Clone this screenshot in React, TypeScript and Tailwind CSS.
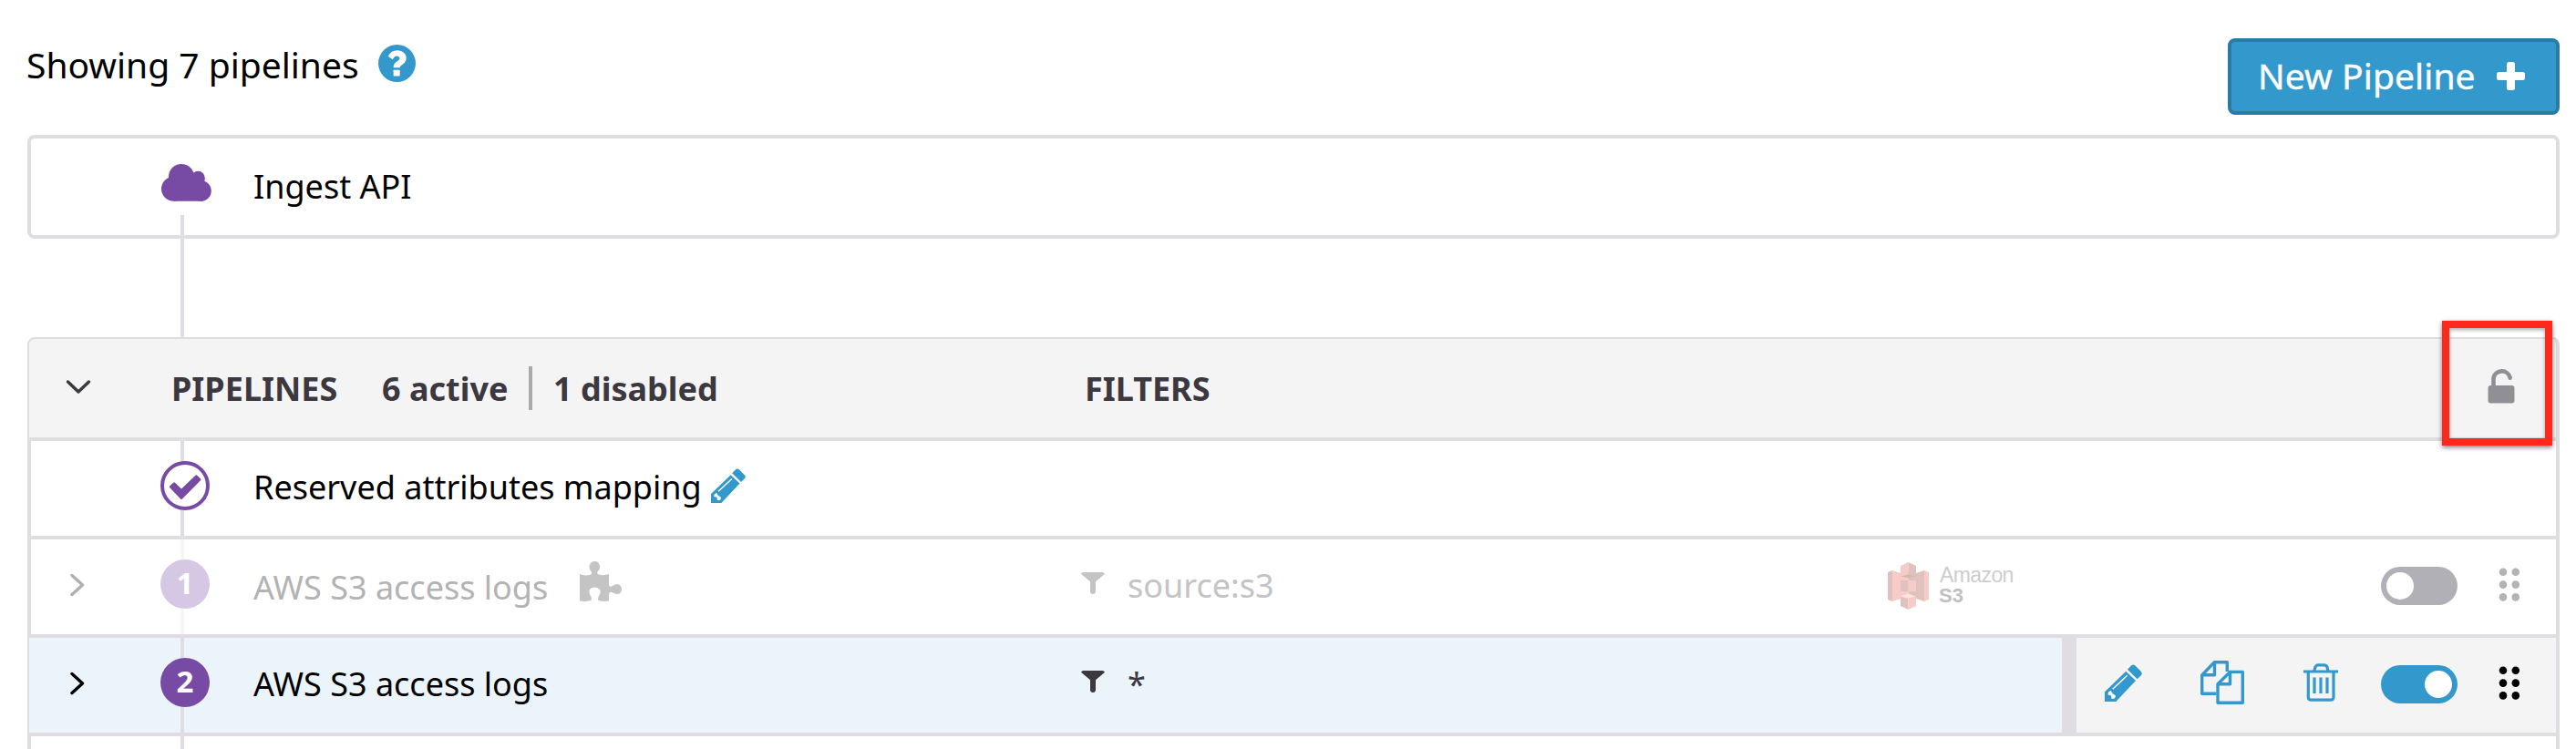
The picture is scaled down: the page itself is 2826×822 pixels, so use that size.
import React from "react";

const LINE = "bg-[#dfdde2]";

function PencilIcon({ className }: { className: string }) {
  return (
    <svg viewBox="0 0 41 41" className={className} fill="#3399cd">
      <path d="M25 5.700 L29 1.500 Q31 -.5 33.200 1.300 L39.700 7.800 Q41.600 10 40 12 L35.700 16.200 Z" />
      <path d="M23.300 7.700 L34 17.900 L12.300 41 H0 V30.300 Z" />
      <path d="M8.700 27.300 L24.700 12.300" stroke="#fff" strokeWidth="1.5" fill="none" />
      <path d="M4 30.500 L6.5 29 L8.5 32 L12 34.5 L11 37.5 L7.5 38 L7 34.2 L3.4 33.4 Z" fill="#fff" />
    </svg>
  );
}

function ChevronRight({ className }: { className: string }) {
  return (
    <svg viewBox="0 0 16 26" className={className} fill="none" stroke="currentColor" strokeWidth="3.4" strokeLinecap="round" strokeLinejoin="round">
      <path d="M2 2.5 L13.5 13 L2 23.5" />
    </svg>
  );
}

function FilterIcon({ className }: { className: string }) {
  return (
    <svg viewBox="0 0 26 24" className={className} fill="currentColor">
      <path d="M2.5 0 H23.5 Q25 0 26 1.6 Q25.4 2.6 24 3.5 L16 10.3 V21.5 Q15.6 24 13 24 Q10.4 24 10 21.5 V10.3 L2 3.5 Q.6 2.6 0 1.6 Q1 0 2.5 0 Z" />
    </svg>
  );
}

function Dots() {
  return (
    <svg viewBox="0 0 24 38" className="ml-[45px] mt-[31px] h-[38px] w-6 shrink-0" fill="currentColor">
      {[5, 18.8].map((x) => [4.8, 18.6, 32.4].map((y) => <circle key={`${x}-${y}`} cx={x} cy={y} r="4.3" />))}
    </svg>
  );
}

function Toggle({ on }: { on: boolean }) {
  return (
    <span className={`mt-[30px] flex h-[42px] w-[84px] shrink-0 rounded-full p-1.5 ${on ? "justify-end bg-[#3399cd]" : "justify-start bg-[#b1b0b6]"}`}>
      <span className="size-[30px] rounded-full bg-white" />
    </span>
  );
}

function Rail({ faded, children }: { faded?: boolean; children?: React.ReactNode }) {
  return (
    <div className="flex h-full w-[54px] shrink-0 flex-col">
      <div className={`ml-[22px] h-[22px] w-1 ${faded ? "bg-[#f5f5f6]" : LINE}`} />
      {children}
      <div className={`ml-[22px] w-1 flex-1 ${faded ? "bg-[#f5f5f6]" : LINE}`} />
    </div>
  );
}

function Badge({ n, className }: { n: number; className: string }) {
  return (
    <span className={`flex size-[54px] shrink-0 items-center justify-center rounded-full text-[33px] leading-none font-bold text-white ${className}`}>
      <span className="-mt-[3px]">{n}</span>
    </span>
  );
}

export default function App() {
  return (
    <div className="h-[822px] w-[2826px] overflow-hidden bg-white font-['Noto_Sans',sans-serif] text-[36px] leading-[48px] whitespace-nowrap text-black">
      <header className="flex h-[148px] items-start justify-between pr-[18px] pl-[29px]">
        <div className="flex items-start">
          <h1 className="mt-[43px] w-[386px] text-[39px] leading-[55px]">Showing 7 pipelines</h1>
          <svg viewBox="0 0 512 512" className="mt-[49px] size-[41px]">
            <circle cx="256" cy="256" r="256" fill="#3399cd" />
            <path
              d="M134 160 C162 106 204 79 262 79 C330 79 383 124 383 182 C383 236 352 258 320 280 C300 294 296 300 296 316 H208 C208 274 220 256 250 234 C276 216 292 206 292 186 C292 168 276 156 256 156 C230 156 218 168 196 202 Z"
              fill="#fff"
            />
            <rect x="208" y="348" width="88" height="82" rx="6" fill="#fff" />
          </svg>
        </div>
        <button className="mt-[42px] flex h-[84px] w-[364px] items-start rounded-lg border-4 border-[#2a7ba3] bg-[#3399cd] pl-[29px] text-[39px] text-white">
          <span className="mt-[9px] w-[262px] text-left leading-[55px] tracking-[0.1px] [-webkit-text-stroke:0.4px_white]">New Pipeline</span>
          <svg viewBox="0 0 31 31" className="mt-[22px] size-[31px]" fill="#fff">
            <rect x="11" y="0" width="9" height="31" rx="2.5" />
            <rect x="0" y="11" width="31" height="9" rx="2.5" />
          </svg>
        </button>
      </header>

      <section className="relative mx-[18px] ml-[30px] flex h-[114px] items-start rounded-lg border-4 border-[#dfdde2]">
        <svg viewBox="0 0 55 41" className="mt-[28px] ml-[143px] h-[41px] w-[55px]" fill="#774aa4">
          <circle cx="22" cy="14" r="14" />
          <circle cx="40.300" cy="15.300" r="7.500" />
          <circle cx="13.500" cy="27.300" r="13.500" />
          <circle cx="43.500" cy="29.500" r="11.300" />
          <path d="M8 13 H36 L47.500 17 L46 40.800 H13.500 Z" />
        </svg>
        <span className="mt-[29px] ml-[46px]">Ingest API</span>
        <span className="absolute top-[84px] left-[164px] h-[134px] w-1 bg-[#dfdde2]" />
      </section>

      <section className="relative mt-[108px] mr-[18px] ml-[30px] text-[#3c3840]">
        <div className="flex h-[114px] items-start rounded-t-lg border-t-2 border-r-4 border-b-4 border-l-2 border-[#dfdde2] bg-[#f4f4f4] font-bold">
          <svg viewBox="0 0 28 18" className="mt-[44px] ml-[40px] h-[18px] w-7" fill="none" stroke="currentColor" strokeWidth="3.4" strokeLinecap="round" strokeLinejoin="round">
            <path d="M2.5 3 L14 14 L25.5 3" />
          </svg>
          <span className="mt-[31px] ml-[88px] w-[231px]">PIPELINES</span>
          <span className="mt-[31px] w-[161px]">6 active</span>
          <span className="mt-[30px] h-12 w-1 bg-[#a9a9a9]" />
          <span className="mt-[31px] ml-[23px] w-[583px]">1 disabled</span>
          <span className="mt-[31px]">FILTERS</span>
          <svg viewBox="0 0 30 40" className="mt-[31px] mr-[45px] ml-auto h-10 w-[30px]">
            <path d="M6.5 22 V12 A9.3 9.3 0 0 1 24.7 11.5 V11.8" fill="none" stroke="#918f96" strokeWidth="4.6" strokeLinecap="round" />
            <rect x=".5" y="20" width="29" height="19.5" rx="3" fill="#918f96" />
          </svg>
        </div>

        <div className="flex h-[108px] items-start border-x-4 border-b-4 border-[#dfdde2] bg-white pl-[142px] text-black">
          <Rail>
            <svg viewBox="0 0 54 54" className="size-[54px] shrink-0">
              <circle cx="27" cy="27" r="25" fill="#fff" stroke="#774aa4" strokeWidth="4" />
              <path
                d="M11.300 28.300 L15 24.800 L23 32.500 L39.300 16.700 L43 20.300 L23 40.500 Z"
                fill="#774aa4"
                stroke="#774aa4"
                strokeWidth="2.800"
                strokeLinejoin="round"
              />
            </svg>
          </Rail>
          <span className="mt-[27px] ml-[48px] w-[502px]">Reserved attributes mapping</span>
          <PencilIcon className="mt-[30px] h-[38px] w-[38px]" />
        </div>

        <div className="flex h-[108px] items-start border-x-4 border-b-4 border-[#dfdde2] bg-white">
          <ChevronRight className="mt-[37px] ml-[43px] h-[26px] w-4 text-[#b0b0b0]" />
          <div className="ml-[83px] h-full">
            <Rail faded>
              <Badge n={1} className="bg-[#d6c8e4]" />
            </Rail>
          </div>
          <span className="mt-[29px] ml-[48px] w-[358px] text-[#b3b3b3]">AWS S3 access logs</span>
          <svg viewBox="0 0 46 44" className="mt-[24px] h-[44px] w-[46px]" fill="#c4c4c4">
            <path d="M0 14 Q6 16.5 12 14.5 Q14 13.5 12.5 11 Q10 8 10.5 5 Q12 0 16.5 0 Q21 0 22 5 Q22.5 8 20 11 Q18 13.5 21 14.5 Q26 16 32 14 V24 Q32 29 35 27.5 Q38 25 41 25 Q46 26 46 31 Q45.500 36 41 36 Q38 36 35.500 34 Q32.500 33 32 37 V43.500 Q27 44.500 20.500 43 Q19.500 41 21 38 Q23.500 34 22 31 Q20 28.500 16.500 28.500 Q12.500 28.500 11 31 Q9.500 34 12 38 Q13.500 41 12.500 43 Q6 44.500 0 43.500 Z" />
          </svg>
          <FilterIcon className="mt-[36px] ml-[504px] h-6 w-[26px] text-[#c4c4c4]" />
          <span className="mt-[27px] ml-[25px] w-[834px] text-[#c4c4c4]">source:s3</span>
          <svg viewBox="0 0 45 52" className="mt-[25px] h-[52px] w-[45px]">
            <path d="M0 11 L5 9 V43 L0 41 Z" fill="#dfc1bd" />
            <path d="M5 9 L14 12 H23 V40 H14 L5 43 Z" fill="#f7ccc8" />
            <path d="M23 12 H31 L40 9 V43 L31 40 H23 Z" fill="#dfc1bd" />
            <path d="M40 9 L45 11 V41 L40 43 Z" fill="#f7ccc8" />
            <path d="M14 4 L22.500 0 V14 L14 16 Z" fill="#f7ccc8" />
            <path d="M22.500 0 L31 4 V16 L22.500 14 Z" fill="#dfc1bd" />
            <path d="M14 15.500 L22.500 13.500 L31 15.500 L22.500 17 Z" fill="#d3b5b1" />
            <path d="M14 20 H22.500 V32 H14 Z" fill="#dfc1bd" />
            <path d="M22.500 20 H31 V32 H22.500 Z" fill="#f7ccc8" />
            <path d="M14 38 L22.500 40 V52 L14 48 Z" fill="#dfc1bd" />
            <path d="M22.500 40 L31 38 V48 L22.500 52 Z" fill="#f7ccc8" />
            <path d="M14 37.500 L22.500 34.500 L31 37.500 L22.500 39.500 Z" fill="#fae6e3" />
          </svg>
          <span className="mt-[23px] ml-[12px] flex w-[484px] flex-col font-['Liberation_Sans',sans-serif] text-[22px] leading-[22px] text-[#c0c0c0]">
            <span className="mt-[5px] text-[23px] tracking-[-0.6px] text-[#cdcdcd]">Amazon</span>
            <span className="mt-px -ml-[1px] font-bold">S3</span>
          </span>
          <Toggle on={false} />
          <span className="text-[#b3b3b3]">
            <Dots />
          </span>
        </div>

        <div className="flex h-[108px] items-start border-r-4 border-b-4 border-l-2 border-[#dfdde2] bg-[#ebf4fa]">
          <ChevronRight className="mt-[37px] ml-[45px] h-[26px] w-4 text-black" />
          <div className="ml-[83px] h-full">
            <Rail>
              <Badge n={2} className="bg-[#774aa4]" />
            </Rail>
          </div>
          <span className="mt-[27px] ml-[48px] w-[908px] text-black">AWS S3 access logs</span>
          <FilterIcon className="mt-[36px] h-6 w-[26px] text-[#3c3840]" />
          <span className="mt-[27px] ml-[25px]">*</span>
          <div className="ml-auto box-border flex h-full w-[542px] items-start border-l-[16px] border-[#dfdde2] bg-[#f4f4f4] pl-[31px]">
            <PencilIcon className="mt-[29px] h-[41px] w-[41px] shrink-0" />
            <svg viewBox="0 0 48 48" className="mt-[25px] ml-[64px] size-12 shrink-0" fill="none" stroke="#3399cd" strokeWidth="3.400" strokeLinejoin="round">
              <path d="M17.500 36.200 H1.700 V16 L15.300 1.700 H29.300 V12 M15.500 1.700 V15.800 H1.700" />
              <path d="M32.500 12.400 H46.300 V46.300 H19 V25.800 L32.500 12.400 V25.800 H19" />
            </svg>
            <svg viewBox="0 0 38 42" className="mt-[28px] ml-[65px] h-[42px] w-[38px] shrink-0" fill="none" stroke="#3399cd" strokeWidth="3.200">
              <path d="M0 9 H38 M5.300 9 V37 Q5.300 40.200 8.500 40.200 H30 Q33 40.200 33 37 V9 M11.500 9 L13 4 Q14 1.900 16 1.900 H22.500 Q25 1.900 26 4 L27 9 M12 15.500 V33 M19 15.500 V33 M26 15.500 V33" />
            </svg>
            <span className="ml-[47px]">
              <Toggle on />
            </span>
            <span className="text-black">
              <Dots />
            </span>
          </div>
        </div>

        <div className="flex h-[14px] border-x-4 border-[#dfdde2] pl-[164px]">
          <div className="h-full w-1 bg-[#dfdde2]" />
        </div>

        <div className="absolute top-[-18px] right-[8px] h-[137px] w-[121px] border-8 border-[#ff281c] shadow-[0_2px_5px_rgba(0,0,0,0.5),inset_0_2px_4px_rgba(0,0,0,0.35)]" />
      </section>
    </div>
  );
}
